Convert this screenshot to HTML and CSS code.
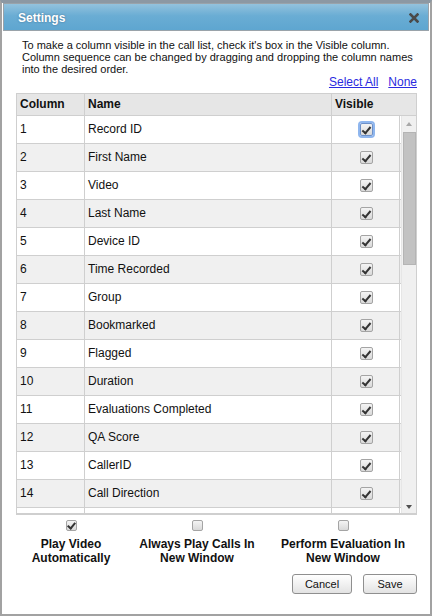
FILE: index.html
```html
<!DOCTYPE html>
<html>
<head>
<meta charset="utf-8">
<link rel="stylesheet" href="styles.css">
</head>
<body>
<div class="dialog">
  <div class="titlebar">
    <span class="title">Settings</span>
    <svg class="close" width="10" height="10" viewBox="0 0 10 10"><path d="M1.5 1.5 L8.5 8.5 M8.5 1.5 L1.5 8.5" stroke="#4a4a4a" stroke-width="2.6" stroke-linecap="square"/></svg>
  </div>
  <p class="desc">To make a column visible in the call list, check it's box in the Visible column.<br>Column sequence can be changed by dragging and dropping the column names<br>into the desired order.</p>
  <div class="links"><a href="#">Select All</a><a href="#">None</a></div>
  <div class="grid">
    <div class="head">
      <div class="hc c1">Column</div>
      <div class="hc c2">Name</div>
      <div class="hc c3">Visible</div>
    </div>
    <div class="bodywrap">
      <div class="rows">
        <div class="row"><div class="cell c1">1</div><div class="cell c2">Record ID</div><div class="cell c3"><span class="cb checked focus"></span></div></div>
        <div class="row alt"><div class="cell c1">2</div><div class="cell c2">First Name</div><div class="cell c3"><span class="cb checked"></span></div></div>
        <div class="row"><div class="cell c1">3</div><div class="cell c2">Video</div><div class="cell c3"><span class="cb checked"></span></div></div>
        <div class="row alt"><div class="cell c1">4</div><div class="cell c2">Last Name</div><div class="cell c3"><span class="cb checked"></span></div></div>
        <div class="row"><div class="cell c1">5</div><div class="cell c2">Device ID</div><div class="cell c3"><span class="cb checked"></span></div></div>
        <div class="row alt"><div class="cell c1">6</div><div class="cell c2">Time Recorded</div><div class="cell c3"><span class="cb checked"></span></div></div>
        <div class="row"><div class="cell c1">7</div><div class="cell c2">Group</div><div class="cell c3"><span class="cb checked"></span></div></div>
        <div class="row alt"><div class="cell c1">8</div><div class="cell c2">Bookmarked</div><div class="cell c3"><span class="cb checked"></span></div></div>
        <div class="row"><div class="cell c1">9</div><div class="cell c2">Flagged</div><div class="cell c3"><span class="cb checked"></span></div></div>
        <div class="row alt"><div class="cell c1">10</div><div class="cell c2">Duration</div><div class="cell c3"><span class="cb checked"></span></div></div>
        <div class="row"><div class="cell c1">11</div><div class="cell c2">Evaluations Completed</div><div class="cell c3"><span class="cb checked"></span></div></div>
        <div class="row alt"><div class="cell c1">12</div><div class="cell c2">QA Score</div><div class="cell c3"><span class="cb checked"></span></div></div>
        <div class="row"><div class="cell c1">13</div><div class="cell c2">CallerID</div><div class="cell c3"><span class="cb checked"></span></div></div>
        <div class="row alt"><div class="cell c1">14</div><div class="cell c2">Call Direction</div><div class="cell c3"><span class="cb checked"></span></div></div>
        <div class="row"><div class="cell c1"></div><div class="cell c2"></div><div class="cell c3"></div></div>
      </div>
      <div class="scrollbar">
        <span class="arrow up"></span>
        <span class="thumb"></span>
        <span class="spacer"></span>
        <span class="arrow down"></span>
      </div>
    </div>
  </div>
  <div class="options">
    <div class="opt"><span class="cb small checked"></span><span class="olabel">Play Video<br>Automatically</span></div>
    <div class="opt"><span class="cb small"></span><span class="olabel">Always Play Calls In<br>New Window</span></div>
    <div class="opt"><span class="cb small"></span><span class="olabel">Perform Evaluation In<br>New Window</span></div>
  </div>
  <div class="buttons">
    <button class="btn cancel">Cancel</button>
    <button class="btn save">Save</button>
  </div>
</div>
</body>
</html>
```
FILE: styles.css
```css
* { box-sizing: border-box; }
html, body { margin: 0; padding: 0; background: #fff; }
body { font-family: "Liberation Sans", Arial, sans-serif; color: #000; }

.dialog {
  width: 432px;
  height: 616px;
  border: 2px solid #a2a2a2;
  border-top: 3px solid #8c98a3;
  padding: 0 1px 0 1px;
  display: flex;
  flex-direction: column;
  background: #fff;
}

.titlebar {
  height: 28px;
  border: 1px solid #9aa3aa;
  background: linear-gradient(to bottom, #93c2dd 0%, #6aadd4 45%, #5ea6d0 100%);
  display: flex;
  align-items: center;
  justify-content: space-between;
  padding: 0 9px 0 14px;
}
.title {
  color: #fff;
  font-weight: bold;
  font-size: 12px;
  text-shadow: 0 0 2px rgba(40, 70, 100, 0.6);
  margin-top: 1px;
}
.close { display: block; margin-top: 2px; }

.desc {
  margin: 8px 0 0 0;
  padding-left: 19px;
  font-size: 11px;
  line-height: 12px;
  color: #111;
}

.links {
  display: flex;
  justify-content: flex-end;
  gap: 10px;
  padding-right: 12px;
  font-size: 12px;
  line-height: 14px;
  margin-top: 0;
}
.links a { color: #2a2ae0; text-decoration: underline; }

.grid {
  margin: 4px 12px 0 13px;
  border: 1px solid #cfcfcf;
  border-bottom: 2px solid #cfcfcf;
  display: flex;
  flex-direction: column;
}
.head {
  display: grid;
  grid-template-columns: 68px 247px 84px;
  height: 22px;
  background: #e6e6e6;
  border-bottom: 1px solid #cfcfcf;
}
.hc {
  font-weight: bold;
  font-size: 12px;
  line-height: 21px;
  padding-left: 3px;
  color: #111;
}
.head .c1, .head .c2 { border-right: 1px solid #cfcfcf; }

.bodywrap {
  display: flex;
  height: 397px;
  overflow: hidden;
}
.rows {
  width: 384px;
  display: flex;
  flex-direction: column;
}
.row {
  display: grid;
  grid-template-columns: 68px 247px 68px;
  flex: 0 0 28px;
  height: 28px;
  border-bottom: 1px solid #cfcfcf;
  background: #fff;
}
.row.alt { background: #f0f0f0; }
.cell {
  font-size: 12px;
  line-height: 27px;
  padding-left: 3px;
  color: #111;
}
.row .c1, .row .c2, .row .c3 { border-right: 1px solid #cfcfcf; }
.row .c3 { display: flex; align-items: center; justify-content: center; padding-left: 1px; }

.cb {
  display: inline-block;
  width: 13px;
  height: 13px;
  border: 1px solid #a4a4a4;
  border-radius: 2px;
  background: linear-gradient(to bottom, #f4f4f4, #d9d9d9);
  position: relative;
}
.cb.checked::after {
  content: "";
  position: absolute;
  left: 3px;
  top: 1px;
  width: 3px;
  height: 7px;
  border: solid #333;
  border-width: 0 2.5px 2.5px 0;
  transform: rotate(40deg);
}
.cb.focus { box-shadow: 0 0 0 2px #8fb6ee; border-color: #6d90c8; }

.scrollbar {
  width: 15px;
  background: #f0f0f0;
  display: flex;
  flex-direction: column;
  align-items: center;
  border-left: 1px solid #e6e6e6;
}
.arrow {
  width: 0;
  height: 0;
  border-left: 3.5px solid transparent;
  border-right: 3.5px solid transparent;
}
.arrow.up { border-bottom: 4px solid #a8a8a8; margin-top: 6px; }
.arrow.down { border-top: 4px solid #505050; margin-bottom: 4px; }
.thumb {
  width: 13px;
  height: 133px;
  margin-top: 6px;
  background: #c2c2c2;
  border: 1px solid #b4b4b4;
}
.spacer { flex: 1; }

.options {
  display: grid;
  grid-template-columns: 110px 142px 150px;
  margin: 5px 0 0 13px;
}
.opt {
  display: flex;
  flex-direction: column;
  align-items: center;
}
.cb.small { width: 11px; height: 11px; }
.cb.small.checked::after { left: 2.5px; top: 0px; width: 3px; height: 6px; border-width: 0 2.2px 2.2px 0; }
.olabel {
  margin-top: 6px;
  font-weight: bold;
  font-size: 12px;
  line-height: 14px;
  text-align: center;
  color: #111;
}

.buttons {
  display: flex;
  justify-content: flex-end;
  gap: 11px;
  padding-right: 12px;
  margin-top: 9px;
}
.btn {
  height: 20px;
  font-family: "Liberation Sans", Arial, sans-serif;
  font-size: 11px;
  color: #111;
  border: 1px solid #8f8f8f;
  border-radius: 3px;
  background: linear-gradient(to bottom, #ffffff, #e3e3e3);
  padding: 0;
}
.btn.cancel { width: 60px; }
.btn.save { width: 54px; }
```
